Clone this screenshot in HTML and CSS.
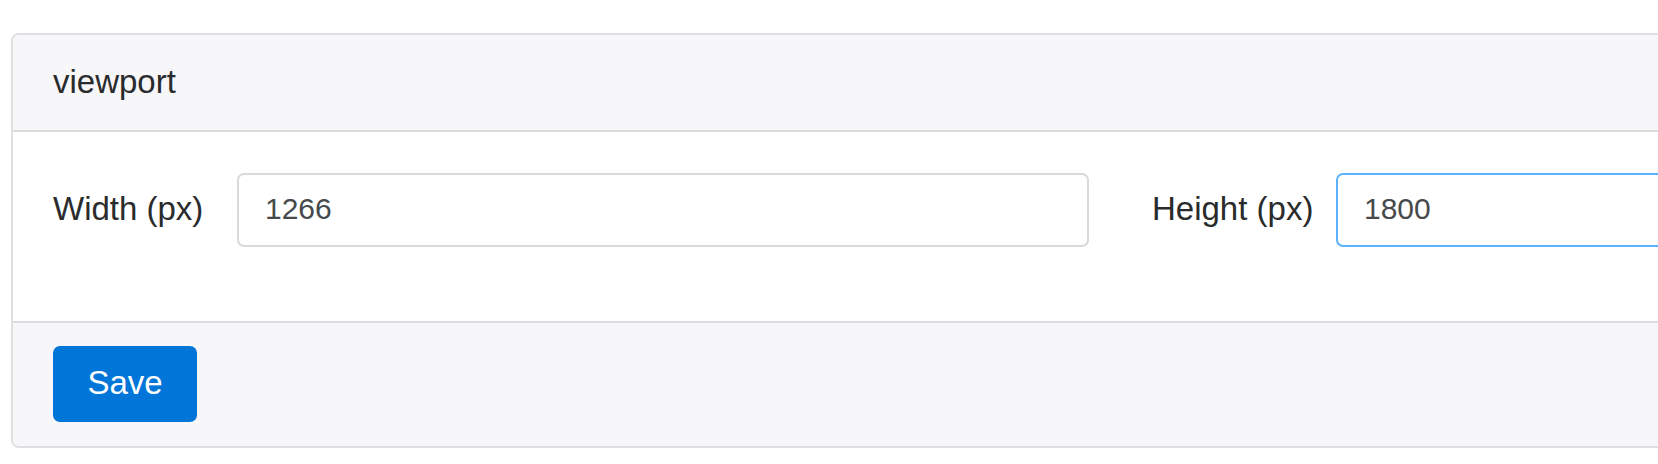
FILE: index.html
```html
<!DOCTYPE html>
<html lang="en">
<head>
<meta charset="utf-8">
<title>viewport</title>
<link rel="stylesheet" href="styles.css">
</head>
<body>
<div class="page">
  <div class="card">
    <div class="card-header">viewport</div>
    <div class="card-body">
      <div class="form-row">
        <div class="form-group">
          <label class="form-label" for="w">Width (px)</label>
          <input class="form-control" id="w" type="text" value="1266">
        </div>
        <div class="form-group">
          <label class="form-label" for="h">Height (px)</label>
          <input class="form-control is-focus" id="h" type="text" value="1800">
        </div>
      </div>
    </div>
    <div class="card-footer">
      <button class="btn-primary" type="button">Save</button>
    </div>
  </div>
</div>
</body>
</html>
```

FILE: styles.css
```css
html, body {
  margin: 0;
  padding: 0;
  background: #ffffff;
}

.page {
  padding: 33px 0 0 11px;
  overflow: hidden;
  height: 464px;
  box-sizing: border-box;
  font-family: "Liberation Sans", Arial, sans-serif;
  color: #292b2c;
}

.card {
  width: 2240px;
  border: 2px solid #dfdfe1;
  border-radius: 8px;
  background: #ffffff;
  overflow: hidden;
}

.card-header {
  height: 97px;
  box-sizing: border-box;
  padding: 0 40px 2px;
  display: flex;
  align-items: center;
  background: #f7f7f9;
  border-bottom: 2px solid #dcdcde;
  font-size: 33px;
}

.card-body {
  padding: 41px 40px 74px;
}

.form-row {
  display: grid;
  grid-template-columns: 1036px 1036px;
  column-gap: 63px;
}

.form-group {
  display: grid;
  grid-template-columns: 184px 1fr;
  align-items: center;
}

.form-label {
  font-size: 33px;
  padding-bottom: 3px;
}

.form-control {
  display: block;
  width: 100%;
  height: 74px;
  box-sizing: border-box;
  padding: 0 26px 3px;
  border: 2px solid #d9d9db;
  border-radius: 7px;
  background: #ffffff;
  font-family: "Liberation Sans", Arial, sans-serif;
  font-size: 30px;
  color: #464a4c;
  outline: none;
}

.form-control.is-focus {
  border-color: #5cb3fd;
}

.card-footer {
  height: 125px;
  box-sizing: border-box;
  padding: 23px 40px 0;
  background: #f7f7f9;
  border-top: 2px solid #dcdcde;
}

.btn-primary {
  display: flex;
  align-items: center;
  justify-content: center;
  width: 144px;
  height: 76px;
  padding: 0 0 3px;
  border: none;
  border-radius: 7px;
  background: #0275d8;
  color: #ffffff;
  font-family: "Liberation Sans", Arial, sans-serif;
  font-size: 33px;
}
```
